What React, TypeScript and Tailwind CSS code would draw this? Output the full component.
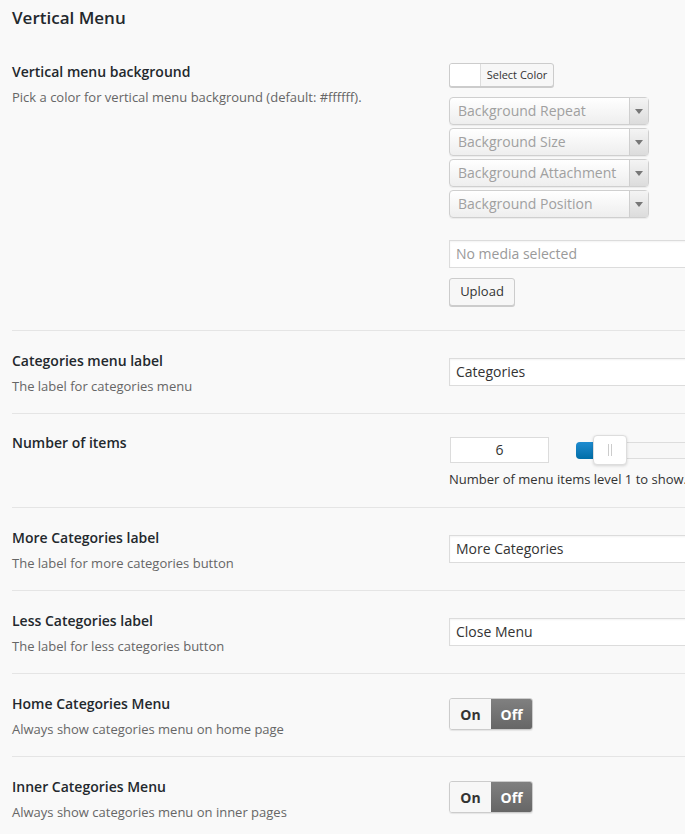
import React from 'react';

const font = { fontFamily: '"Open Sans", "Liberation Sans", sans-serif' };

function Row({
  label,
  desc,
  children,
  className = '',
}: {
  label: string;
  desc?: string;
  children: React.ReactNode;
  className?: string;
}) {
  return (
    <div className={`flex border-t border-[#e5e5e5] ${className}`}>
      <div className="w-[437px] shrink-0">
        <div className="text-[14px] leading-5 font-semibold text-[#23282d]">{label}</div>
        {desc && <div className="mt-[5px] text-[13px] leading-5 text-[#666]">{desc}</div>}
      </div>
      <div className="flex-1">{children}</div>
    </div>
  );
}

function SelectBox({ text }: { text: string }) {
  return (
    <div className="flex h-[28px] w-[200px] rounded-[4px] border border-[#cfcfcf] bg-gradient-to-b from-white to-[#eeeeee] shadow-[0_1px_1px_rgba(0,0,0,0.06)]">
      <div className="flex-1 pl-2 text-[14px] leading-[26px] text-[#a0a0a0]">{text}</div>
      <div className="flex w-[19px] items-center justify-center border-l border-[#cfcfcf] bg-gradient-to-b from-[#f4f4f4] to-[#dcdcdc]">
        <div className="h-0 w-0 border-x-[4px] border-t-[5px] border-x-transparent border-t-[#777]" />
      </div>
    </div>
  );
}

function TextInput({ value, muted = false }: { value: string; muted?: boolean }) {
  return (
    <div
      className={`h-[28px] w-[320px] border border-[#dcdcdc] bg-white pl-[6px] text-[14px] leading-[26px] shadow-[inset_0_1px_2px_rgba(0,0,0,0.05)] ${
        muted ? 'text-[#9a9a9a]' : 'text-[#333]'
      }`}
    >
      {value}
    </div>
  );
}

function Toggle() {
  return (
    <div className="flex h-[32px] w-[84px] overflow-hidden rounded-[3px] border border-[#cccccc] text-[14px] font-bold shadow-[0_1px_1px_rgba(0,0,0,0.08)]">
      <div className="flex w-[41px] items-center justify-center bg-[#f7f7f7] text-[#333]">On</div>
      <div className="flex flex-1 items-center justify-center bg-gradient-to-b from-[#808080] to-[#666] text-white">
        Off
      </div>
    </div>
  );
}

export default function App() {
  return (
    <div className="h-[834px] w-full overflow-hidden bg-[#f9f9f9] pl-3" style={font}>
      <h2 className="pt-[6px] text-[17px] leading-6 font-semibold text-[#23282d]">Vertical Menu</h2>

      <Row
        label="Vertical menu background"
        desc="Pick a color for vertical menu background (default: #ffffff)."
        className="mt-[32px] border-t-0 pt-0 pb-[24px]"
      >
        <div className="mt-[1px] flex h-[24px] w-[105px] overflow-hidden rounded-[3px] border border-[#cccccc] bg-[#f7f7f7] shadow-[0_1px_0_#ccc]">
          <div className="w-[31px] border-r border-[#dddddd] bg-white" />
          <div className="flex-1 text-center text-[11px] leading-[22px] text-[#333]">Select Color</div>
        </div>
        <div className="mt-[10px] flex flex-col gap-[3px]">
          <SelectBox text="Background Repeat" />
          <SelectBox text="Background Size" />
          <SelectBox text="Background Attachment" />
          <SelectBox text="Background Position" />
        </div>
        <div className="mt-[22px]">
          <TextInput value="No media selected" muted />
        </div>
        <div className="mt-[10px] flex h-[28px] w-[66px] items-center justify-center rounded-[3px] border border-[#cccccc] bg-[#f7f7f7] text-[13px] text-[#333] shadow-[0_1px_0_#ccc]">
          Upload
        </div>
      </Row>

      <Row label="Categories menu label" desc="The label for categories menu" className="pt-5 pb-[17px]">
        <div className="mt-[7px]">
          <TextInput value="Categories" />
        </div>
      </Row>

      <Row label="Number of items" className="pt-[19px] pb-[18px]">
        <div className="mt-[2px] flex items-center">
          <div className="ml-px h-[26px] w-[99px] border border-[#dcdcdc] bg-white text-center text-[14px] leading-6 text-[#333]">
            6
          </div>
          <div className="relative ml-[27px] h-[30px] w-[200px]">
            <div className="absolute top-[7px] left-0 h-[17px] w-[200px] rounded-[4px] border border-[#dddddd] bg-[#f7f7f7]" />
            <div className="absolute top-[7px] left-0 h-[17px] w-[22px] rounded-l-[4px] bg-gradient-to-b from-[#1e8cd0] to-[#006ea8]" />
            <div className="absolute top-0 left-[17px] flex h-[30px] w-[34px] items-center justify-center gap-[2px] rounded-[4px] border border-[#dddddd] bg-white shadow-[0_1px_3px_rgba(0,0,0,0.15)]">
              <div className="h-[12px] w-px bg-[#cccccc]" />
              <div className="h-[12px] w-px bg-[#cccccc]" />
            </div>
          </div>
        </div>
        <div className="mt-[4px] text-[13px] leading-5 whitespace-nowrap text-[#333]">
          Number of menu items level 1 to show.
        </div>
      </Row>

      <Row label="More Categories label" desc="The label for more categories button" className="pt-5 pb-[17px]">
        <div className="mt-[7px]">
          <TextInput value="More Categories" />
        </div>
      </Row>

      <Row label="Less Categories label" desc="The label for less categories button" className="pt-5 pb-[17px]">
        <div className="mt-[7px]">
          <TextInput value="Close Menu" />
        </div>
      </Row>

      <Row label="Home Categories Menu" desc="Always show categories menu on home page" className="pt-5 pb-[17px]">
        <div className="mt-[4px]">
          <Toggle />
        </div>
      </Row>

      <Row label="Inner Categories Menu" desc="Always show categories menu on inner pages" className="pt-5 pb-[17px]">
        <div className="mt-[4px]">
          <Toggle />
        </div>
      </Row>
    </div>
  );
}
